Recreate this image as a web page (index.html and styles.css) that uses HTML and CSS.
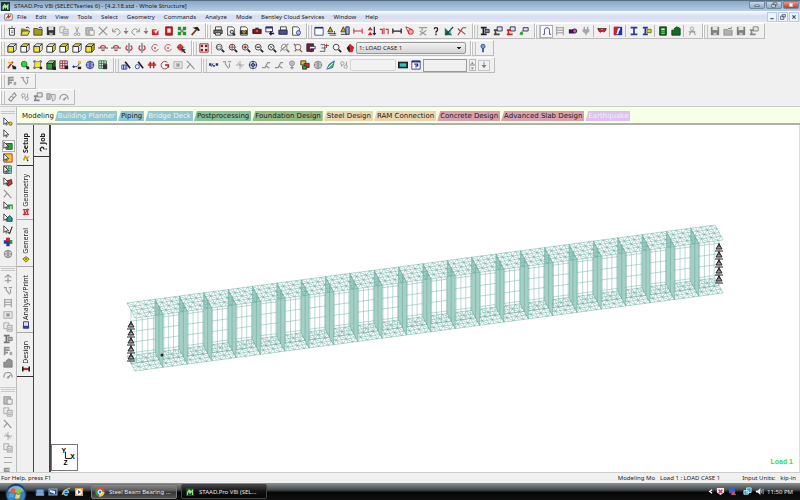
FILE: index.html
```html
<!DOCTYPE html>
<html lang="en">
<head>
    <meta charset="UTF-8">
    <meta name="viewport" content="width=device-width, initial-scale=1.0">
    <title>STAAD.Pro V8i</title>
    <link rel="stylesheet" href="styles.css">
</head>
<body>
    <header class="titlebar">
        <svg class="app-icon" viewBox="0 0 12 12"><rect width="12" height="12" fill="#123c2c"/><path d="M2 10V6l3-4 2 3 3-3v8H8V7L6 9 4 7v3z" fill="#bfe3b0"/></svg>
        <h1>STAAD.Pro V8i (SELECTseries 6) - [4.2.18.std - Whole Structure]</h1>
        <div class="window-buttons">
            <button aria-label="Minimize"><svg viewBox="0 0 12 8"><path d="M3 4h6v2H3z" fill="#fff" stroke="#456"/></svg></button>
            <button aria-label="Restore"><svg viewBox="0 0 12 8"><path d="M5 1h5v3H5zM3 3h5v4H3z" fill="#eee" stroke="#456"/></svg></button>
            <button class="close" aria-label="Close"><svg viewBox="0 0 12 8"><path d="M4 2l4 4M8 2L4 6" stroke="#fff" stroke-width="2"/></svg></button>
        </div>
    </header>

    <nav class="menubar">
        <svg class="doc-icon" viewBox="0 0 12 10"><rect x="1" y="1" width="10" height="8" rx="1" fill="#fff" stroke="#555"/><path d="M3 7l3-4v3l3-3" fill="none" stroke="#c22" stroke-width="1.5"/></svg>
        <a href="#">File</a>
        <a href="#">Edit</a>
        <a href="#">View</a>
        <a href="#">Tools</a>
        <a href="#">Select</a>
        <a href="#">Geometry</a>
        <a href="#">Commands</a>
        <a href="#">Analyze</a>
        <a href="#">Mode</a>
        <a href="#">Bentley Cloud Services</a>
        <a href="#">Window</a>
        <a href="#">Help</a>
        <div class="child-buttons">
            <button aria-label="Minimize document"><svg viewBox="0 0 10 10"><path d="M3 7h4" stroke="#456" stroke-width="1.5"/></svg></button>
            <button aria-label="Restore document"><svg viewBox="0 0 10 10"><path d="M4 2h4v3H4zM2 4h4v4H2z" fill="#eef" stroke="#456"/></svg></button>
            <button aria-label="Close document"><svg viewBox="0 0 10 10"><path d="M3 3l4 4M7 3L3 7" stroke="#456" stroke-width="1.5"/></svg></button>
        </div>
    </nav>

    <!-- a leading "-" means disabled, "|" is a separator, "*" is pressed -->
    <div class="toolbars">
        <div class="toolbar-row">
            <div class="toolbar" data-tools="new open folder save -copy -cut -paste -delete -undo -arrow -redo -arrow redpen book tiles hammer"></div>
            <div class="toolbar" data-tools="print preview camera record export printall page"></div>
            <div class="toolbar" data-tools="window cone conepage dimred loadred framered dim redtag -greytag help greenpen redbeam"></div>
            <div class="toolbar" data-tools="section sheet redsheet greensheet"></div>
            <div class="toolbar" data-tools="*arch -rack moment -plug | bend | flag | ibeam tbeam | calc building | -person"></div>
            <div class="toolbar" data-tools="-save -openview -save -sheet"></div>
        </div>
        <div class="toolbar-row">
            <div class="toolbar" data-tools="cubefront cubeback cubefront cubeside cubetop cubeback cubefull rotx rotx roty roty spin spin redarrow"></div>
            <div class="toolbar" data-tools="frame | zoomwin zoomgrid zoomin zoomout zoomall -pan lens note grab zoom hand">
                <select class="load-case" aria-label="Load case"><option>1: LOAD CASE 1</option></select>
            </div>
            <div class="toolbar" data-tools="key"></div>
        </div>
        <div class="toolbar-row">
            <div class="toolbar" data-tools="beampen greenball yellowbox greencube redgrid node globe greengrid"></div>
            <div class="toolbar" data-tools="wand wand2 stretch circle -plate -axis"></div>
            <div class="toolbar" data-tools="dots -nodes -star wheel -branch -branch -bulb colours -globe leaf -chain">
                <select class="group-list" aria-label="Group" disabled><option></option></select>
                <button class="tool" data-icon="screen"></button>
                <button class="tool" data-icon="helpbox"></button>
                <input class="value-box" type="text" aria-label="Value">
                <span class="spinner"><button aria-label="Up" disabled>▴</button><button aria-label="Down" disabled>▾</button></span>
                <button class="tool framed" data-icon="arrow" disabled></button>
            </div>
        </div>
        <div class="toolbar-row">
            <div class="toolbar" data-tools="-list -nodes"></div>
        </div>
        <div class="toolbar-row">
            <div class="toolbar" data-tools="-link -chain -sheet -book2 -gauge"></div>
        </div>
    </div>

    <main class="workspace">
        <aside class="side-tools">
            <div class="side-group" data-tools="cursorball cursor *cursorgreen cursoryellow cursorgrid cursorred -axis cursortext cursorcube cursorpen cross -globe"></div>
            <div class="side-group" data-tools="-move -nodes -rack -plate -copy -section -list -building -gauge"></div>
            <div class="side-group" data-tools="-paste -copy -axis -star -copy -beam -list"></div>
        </aside>

        <div class="mode">
            <nav class="mode-tabs">
                <a href="#" class="current">Modeling</a>
                <a href="#" class="blue pale">Building Planner</a>
                <a href="#" class="blue">Piping</a>
                <a href="#" class="blue pale">Bridge Deck</a>
                <a href="#" class="green">Postprocessing</a>
                <a href="#" class="olive">Foundation Design</a>
                <a href="#" class="sand">Steel Design</a>
                <a href="#" class="sand">RAM Connection</a>
                <a href="#" class="rose">Concrete Design</a>
                <a href="#" class="rose">Advanced Slab Design</a>
                <a href="#" class="lilac pale">Earthquake</a>
            </nav>
            <div class="mode-body">
                <nav class="page-tabs">
                    <a href="#" class="current"><span>Setup</span><svg viewBox="0 0 10 10"><path d="M2 8l2-5 2 3 2-3" fill="none" stroke="#c5a800" stroke-width="2"/><circle cx="7" cy="8" r="1" fill="#222"/></svg></a>
                    <a href="#"><span>Geometry</span><svg viewBox="0 0 10 10"><path d="M1 2h8M1 8h8M3 2v6l4-6v6" fill="none" stroke="#c33a48" stroke-width="1.5"/></svg></a>
                    <a href="#"><span>General</span><svg viewBox="0 0 10 10"><path d="M1 5l4-3 4 3-4 4z" fill="#e2d51a" stroke="#685f10"/><circle cx="5" cy="5" r="1" fill="#333"/></svg></a>
                    <a href="#"><span>Analysis/Print</span><svg viewBox="0 0 10 10"><rect x="2" y="1" width="6" height="8" fill="#dde" stroke="#226"/><path d="M1 6h8v3H1z" fill="#33418f"/></svg></a>
                    <a href="#"><span>Design</span><svg viewBox="0 0 10 10"><path d="M1 2v6M9 2v6M1 5h8" stroke="#222" stroke-width="2"/><path d="M3 5h3" stroke="#d22" stroke-width="3"/></svg></a>
                </nav>
                <nav class="page-tabs sub">
                    <a href="#" class="current"><span>Job</span><svg viewBox="0 0 10 10"><path d="M3 8Q0 5 3 3q3-1 3 2h1M8 5h2" fill="none" stroke="#222" stroke-width="1.5"/></svg></a>
                </nav>
                <section class="view">
                    <svg class="model" viewBox="51 125 748 347" preserveAspectRatio="xMinYMin"></svg>
                    <svg class="axes" viewBox="0 0 26 26" aria-label="Axes">
                        <path d="M14 7v7h6" fill="none" stroke="#111"/>
                        <text x="10" y="8">Y</text>
                        <text x="19" y="15">X</text>
                        <text x="12" y="21">Z</text>
                    </svg>
                    <p class="load-label">Load 1</p>
                </section>
            </div>
        </div>
    </main>

    <footer class="statusbar">
        <span class="hint">For Help, press F1</span>
        <span>Modeling Mo</span>
        <span class="load">Load 1 : LOAD CASE 1</span>
        <span class="units">Input Units:</span>
        <span>kip-in</span>
    </footer>

    <div class="taskbar">
        <button class="start" aria-label="Start">
            <svg viewBox="0 0 22 22">
                <circle cx="11" cy="11" r="10.5" fill="#1d4a74"/>
                <circle cx="11" cy="12" r="9" fill="#3c82b4"/>
                <path d="M3 8a9 9 0 0 1 16 0q-8 3-16 0z" fill="#a7c8dd" opacity=".7"/>
                <path d="M6 6q2-1.500 4.500 0l-.5 4q-2.500-1.500-5 0z" fill="#ef5a2b"/>
                <path d="M11.500 6q2.500 1.500 5 0l-1 4q-2.500 1.500-4.500 0z" fill="#8cc63f"/>
                <path d="M4.500 11q2.500-1.500 5 0l-1 4q-2-1.500-4.500 0z" fill="#3fa9f5"/>
                <path d="M11 11q2 1.500 4.500 0l-1 4q-2.500 1.500-4.500 0z" fill="#ffd23c"/>
            </svg>
        </button>
        <div class="quick">
            <button aria-label="Show desktop"><svg viewBox="0 0 10 10"><rect x="1" y="2" width="8" height="6" fill="#6fa3dc" stroke="#2d4f80"/><path d="M1 8h8" stroke="#ccd"/></svg></button>
            <button aria-label="Switch windows"><svg viewBox="0 0 10 10"><rect x="1" y="2" width="8" height="6" fill="#234c86" stroke="#8fb0d4"/><path d="M2 3l5 1v3l-5-2z" fill="#dbe8f7"/></svg></button>
            <button aria-label="Internet Explorer"><svg viewBox="0 0 10 10"><path d="M2.500 5.500h5a2.500 2.500 0 1 0-.8 2" fill="none" stroke="#67bdf2" stroke-width="1.600"/><path d="M1 8Q2 3 9 1" fill="none" stroke="#f2c84b"/></svg></button>
            <button aria-label="Media Player"><svg viewBox="0 0 10 10"><rect x="1" y="1" width="8" height="8" fill="#f29a2e"/><circle cx="5" cy="5" r="3" fill="#fff"/><path d="M4 3l3 2-3 2z" fill="#2a66b8"/></svg></button>
        </div>
        <button class="task">
            <svg viewBox="0 0 10 10"><circle cx="5" cy="5" r="4.500" fill="#dd4b39"/><path d="M5 5L1 3a4.500 4.500 0 0 0 3 6.500z" fill="#2e9e4d"/><path d="M5 5h4.500A4.500 4.500 0 0 1 4 9.500z" fill="#f8cc3a"/><circle cx="5" cy="5" r="2" fill="#3f84e5" stroke="#fff"/></svg>
            <span>Steel Beam Bearing ...</span>
        </button>
        <button class="task active">
            <svg viewBox="0 0 10 10"><rect x="1" y="1" width="8" height="8" fill="#1d4a30"/><path d="M2 8V5l2-3 2 2 2-2v6H7V5L5 7 3 5v3z" fill="#9ede7e"/></svg>
            <span>STAAD.Pro V8i (SEL...</span>
        </button>
        <div class="tray">
            <button aria-label="Show hidden icons"><svg viewBox="0 0 6 10"><path d="M5 3L2 5l3 2" fill="none" stroke="#fff" stroke-width="1.500"/></svg></button>
            <svg viewBox="0 0 10 10"><path d="M1 1h8v5L5 9 1 6z" fill="#eee"/><path d="M3 3l4 4M7 3L3 7" stroke="#d2334a" stroke-width="1.500"/></svg>
            <svg viewBox="0 0 10 10"><rect x="1" y="1" width="7" height="6" fill="#2a62c8"/><path d="M3 9l3-5 3 5z" fill="#e2492d"/></svg>
            <svg class="network" viewBox="0 0 10 10"><path d="M1 4h5v4H1zM4 1h5v5H4z" fill="#2aa6c4" stroke="#bde6f0"/></svg>
            <svg viewBox="0 0 10 10"><path d="M1 4h2l3-3v8L3 6H1z" fill="#eee"/><path d="M7 3v4M9 2v6" stroke="#9fc98a"/></svg>
            <time>11:50 PM</time>
        </div>
    </div>

    <script src="script.js"></script>
</body>
</html>
```
FILE: styles.css
```css
*,
*::before {
    box-sizing: border-box;
}
body {
    margin: 0;
    height: 100vh;
    display: flex;
    flex-direction: column;
    overflow: hidden;
    background-color: #f0f0f0;
    color: #222;
    font: 6px/10px "Noto Sans", "Open Sans", sans-serif;
}
button {
    padding: 0;
    border: 0;
    background: none;
    font: inherit;
    color: inherit;
}
a {
    color: inherit;
    text-decoration: none;
}
svg {
    display: block;
}

/* title and menu */
.titlebar {
    height: 11px;
    flex: none;
    display: flex;
    align-items: center;
    border-top: 1px solid #586d82;
    background: linear-gradient(#87a8c9, #b6cde4);
}
.app-icon {
    width: 9px;
    height: 9px;
    margin: 0 4px 0 1px;
}
.titlebar h1 {
    margin: 0;
    font-size: 6px;
    font-weight: 400;
}
.window-buttons {
    display: flex;
    gap: 1px;
    margin: 0 1px 2px auto;
}
.window-buttons button {
    width: 16px;
    height: 8px;
    border: 1px solid #7189a3;
    border-radius: 0 0 2px 2px;
    background: linear-gradient(#c9d9e9, #91abc6);
}
.window-buttons .close {
    background: linear-gradient(#dc9a8e, #bd3c25);
}
.window-buttons svg {
    width: 100%;
    height: 100%;
}
.menubar {
    height: 12px;
    flex: none;
    display: flex;
    align-items: center;
    gap: 9px;
    background: linear-gradient(#fff, #d7def1 45%, #dfe4f5);
    border-bottom: 1px solid #fafafa;
}
.doc-icon {
    width: 9px;
    height: 8px;
    margin: 0 -5px 0 4px;
}
.child-buttons {
    display: flex;
    gap: 1px;
    margin: 0 1px 0 auto;
}
.child-buttons button {
    width: 10px;
    height: 10px;
    border: 1px solid #b9cbe0;
    background-color: #edf3fb;
}

/* toolbars */
.toolbars {
    flex: none;
    padding-bottom: 1px;
    border-bottom: 1px solid #ccc;
}
.toolbar-row {
    display: flex;
    height: 16px;
    margin-bottom: 1px;
}
.toolbar-row:nth-child(n+3) {
    margin-bottom: 0;
}
.toolbar {
    display: flex;
    align-items: center;
    padding-right: 4px;
    border: 1px solid;
    border-color: #fff #bcbcbc #bcbcbc #fff;
}
.toolbar::before {
    content: "";
    width: 4px;
    height: 13px;
    border: 1px solid #c2c2c2;
    border-width: 0 1px;
    flex: none;
}
.tool {
    width: 13px;
    height: 13px;
    flex: none;
    display: flex;
    align-items: center;
    justify-content: center;
}
.tool svg {
    width: 10px;
    height: 10px;
    flex: none;
}
.tool[data-icon="arrow"] {
    width: 7px;
}
.tool:disabled {
    color: #999;
    filter: grayscale(1);
    opacity: .6;
}
.tool.pressed {
    border: 1px solid #b0b0b0;
    background-color: #fafafa;
}
.tool.framed {
    width: 12px;
    height: 11px;
    margin-left: 2px;
    border: 1px solid #aaa;
}
.tool-sep {
    width: 1px;
    height: 12px;
    margin: 0 1px;
    background-color: #bbb;
}
select {
    height: 12px;
    padding: 0 4px;
    border: 1px solid #999;
    border-radius: 2px;
    appearance: none;
    font: inherit;
    color: #222;
    background: linear-gradient(45deg, transparent 50%, #222 50%) no-repeat right 6px center / 2px 2px,
        linear-gradient(-45deg, transparent 50%, #222 50%) no-repeat right 4px center / 2px 2px,
        linear-gradient(#f1f1f1, #d4d4d4);
}
.load-case {
    width: 110px;
    padding: 0 2px;
}
.group-list {
    width: 46px;
    border-color: #ccc;
    background: #f4f4f4;
}
.value-box {
    width: 44px;
    height: 13px;
    margin-left: 1px;
    padding: 0 2px;
    border: 1px solid #999;
    background-color: #f0f0f0;
    font: inherit;
}
.spinner {
    display: flex;
    flex-direction: column;
    margin-left: 2px;
}
.spinner button {
    width: 7px;
    height: 6px;
    border: 1px solid #bbb;
    font-size: 5px;
    line-height: 4px;
    color: #888;
}

/* work area */
.workspace {
    flex: 1;
    min-height: 0;
    display: flex;
}
.side-tools {
    width: 17px;
    flex: none;
    padding-top: 3px;
    overflow: hidden;
    border-right: 1px solid #bbb;
}
.side-group {
    display: flex;
    flex-direction: column;
    align-items: center;
    padding-bottom: 6px;
    border-bottom: 1px solid #ccc;
}
.side-group::before {
    content: "";
    width: 14px;
    height: 3px;
    margin: 1px 0 2px;
    border: 1px solid #c8c8c8;
    border-width: 1px 0;
}
.side-group .tool {
    height: 12px;
}
.mode {
    flex: 1;
    min-width: 0;
    display: flex;
    flex-direction: column;
}
.mode-tabs {
    display: flex;
    flex: none;
    gap: 1px;
    padding: 4px 0 2px 2px;
    background-color: #f7ffe6;
    border-bottom: 2px solid #aeb0ae;
    font: 7px/10px "DejaVu Sans", sans-serif;
}
.mode-tabs a {
    padding: 0 2px 0 3px;
    clip-path: polygon(3px 0, 100% 0, 100% 100%, 0 100%);
}
.mode-tabs .current {
    padding-right: 0;
}
.mode-tabs .blue {
    background-color: #92c5cf;
}
.mode-tabs .green {
    background-color: #86c096;
}
.mode-tabs .olive {
    background-color: #94ba83;
}
.mode-tabs .sand {
    background-color: #e8d5ad;
}
.mode-tabs .rose {
    background-color: #d9a0ac;
}
.mode-tabs .lilac {
    background-color: #dfc0f0;
}
.mode-tabs .pale {
    color: #e2f6fa;
}
.mode-body {
    flex: 1;
    min-height: 0;
    display: flex;
}
.page-tabs {
    width: 17px;
    flex: none;
    border-right: 1px solid #444;
    font-size: 7px;
}
.page-tabs.sub {
    border-right-width: 2px;
}
.page-tabs a {
    display: flex;
    flex-direction: column;
    align-items: center;
    gap: 1px;
    padding: 8px 0 3px 2px;
    border-bottom: 1px solid #aaa;
}
.page-tabs .current,
.page-tabs a:last-child {
    border-color: #333;
}
.page-tabs .current {
    font-weight: 700;
}
.page-tabs span {
    writing-mode: vertical-rl;
    transform: rotate(180deg);
}
.page-tabs svg {
    width: 8px;
    height: 8px;
}
.view {
    position: relative;
    flex: 1;
    min-width: 0;
    background-color: #fff;
    border-right: 1px solid #ddd;
}
.model {
    width: 100%;
    height: 100%;
}
.mesh {
    fill: none;
    stroke: #68aca0;
    stroke-width: .5;
}
.mesh-web {
    stroke: #78b2a6;
}
.stiffener {
    fill: #a5d0c6;
    stroke: #5ea597;
    stroke-width: .5;
}
.support {
    fill: #999;
    stroke: #222;
    stroke-width: 1;
}
.axes {
    position: absolute;
    left: 0;
    bottom: 1px;
    width: 27px;
    height: 27px;
    border: 1px solid #777;
}
.axes text {
    font: 700 7px "Liberation Sans", sans-serif;
}
.load-label {
    position: absolute;
    right: 6px;
    bottom: 5px;
    margin: 0;
    color: #2be82b;
    font: 700 7px/10px "Liberation Sans", sans-serif;
}

/* status bar and taskbar */
.statusbar {
    height: 11px;
    flex: none;
    display: flex;
    align-items: center;
    gap: 5px;
    padding: 0 4px 0 1px;
    border-top: 1px solid #ccc;
}
.hint {
    margin-right: auto;
}
.units {
    margin-left: 17px;
}
.taskbar {
    height: 17px;
    flex: none;
    display: flex;
    align-items: center;
    gap: 4px;
    padding: 0 7px 0 5px;
    background: linear-gradient(#8b9092, #45494b 40%, #050607 55%, #111);
    color: #e8e8e8;
    white-space: nowrap;
}
.start {
    width: 22px;
    height: 18px;
    flex: none;
    overflow: hidden;
}
.start svg {
    width: 22px;
    height: 22px;
}
.quick {
    display: flex;
    gap: 3px;
    margin: 0 3px 0 4px;
}
.quick svg,
.task svg {
    width: 10px;
    height: 10px;
    flex: none;
}
.task {
    width: 86px;
    height: 15px;
    display: flex;
    align-items: center;
    gap: 4px;
    padding: 0 2px 0 3px;
    border: 1px solid #777;
    border-radius: 2px;
    background: linear-gradient(#888, #555 48%, #333 52%, #555);
}
.task.active {
    border-color: #444;
    background: linear-gradient(#444, #111 50%, #050505);
}
.tray {
    display: flex;
    align-items: center;
    gap: 3px;
    margin-left: auto;
}
.tray svg {
    width: 9px;
    height: 9px;
}
.tray button svg {
    width: 5px;
}
.network {
    margin-left: 3px;
}
```
FILE: script.js
```js
// small drawing helpers, every icon lives on a 12x12 grid
const line = (d, color = '#222', w = 1) => `<path d="${d}" fill="none" stroke="${color}" stroke-width="${w}"/>`;
const fill = (d, color, edge = 'none') => `<path d="${d}" fill="${color}" stroke="${edge}"/>`;
const ring = (x, y, r, color = '#222', inner = 'none') => `<circle cx="${x}" cy="${y}" r="${r}" fill="${inner}" stroke="${color}"/>`;

const sheet = fill('M2 1h6l2 2v8H2z', '#fff', '#333');
const lens = ring(5, 5, 3.5, '#333', '#f6f6f6') + line('M8 8l3 3', '#222', 2);
const pointer = fill('M1 1v8l2-2 1 3 1-1-1-2h3z', '#fff', '#333');
const disk = fill('M1 1h10v10H1z', '#333') + fill('M3 1h6v4H3z', '#ddd') + fill('M4 8h4v3H4z', '#aaa');
const box = (front, top, side) =>
    fill('M1 4h7v7H1z', front, '#222') + fill('M1 4l3-3h7L8 4z', top, '#222') + fill('M8 4l3-3v7l-3 3z', side, '#222');
const beamSheet = (color) => fill('M5 1h6v5H5z', '#dde', '#224') + line('M1 5h5M1 10h7M3 5v5', color, 2);
const grid = (color) => fill('M1 1h9v9H1z', '#eee', color) + line('M4 1v9M7 1v9M1 4h9M1 7h9', color);

const icons = {
    new: fill('M3 3h6v8H3z', '#fff', '#333') + line('M1 4l2-2M6 0v3M10 2L8 4M5 6h3M5 8h3', '#555'),
    open: fill('M1 3h4l1 1h4v7H1z', '#8b8420') + fill('M3 6h9l-3 5H1z', '#e2da54', '#4d4810') + line('M7 2q3-2 4 1'),
    folder: fill('M1 3h4l1 1h5v7H1z', '#a39a25', '#49440c') + line('M7 2q3-2 4 1'),
    save: disk,
    copy: fill('M1 1h6v7H1z', '#eee', '#666') + fill('M5 4h6v7H5z', '#ddd', '#666') + line('M6 7h4M6 9h4', '#777'),
    cut: line('M4 1l3 7M8 1L5 8', '#555') + ring(4, 10, 1.5, '#555') + ring(8, 10, 1.5, '#555'),
    paste: fill('M1 2h8v9H1z', '#999', '#555') + fill('M5 5h6v6H5z', '#eee', '#555'),
    delete: line('M1 1l10 10M11 1L1 11', '#555', 1.5),
    undo: line('M2 3v4h4M2 7q5-6 8-2t-3 6', '#555', 1.2),
    redo: line('M10 3v4H6M10 7Q5 1 2 5t3 6', '#555', 1.2),
    arrow: line('M6 2v5', '#333') + fill('M3 6h6l-3 4z', '#333'),
    redpen: fill('M1 4h8v7H1z', '#c9232c') + line('M5 8l6-7', '#eee', 2) + line('M3 6h3v3', '#fff'),
    book: fill('M2 1h8v10H2z', '#c22', '#711') + fill('M4 3h4v5H4z', '#eee'),
    tiles: fill('M1 1h4v4H1zM7 1h4v4H7zM1 7h4v4H1zM7 7h4v4H7z', '#26922f') + line('M4 6h4M6 4v4', '#555'),
    hammer: line('M2 11l6-7', '#6b4a16', 2) + fill('M3 2l6-1 3 4-2 1-3-2z', '#222'),
    print: fill('M3 1h7v4H3z', '#fff', '#333') + fill('M1 5h10v4H1z', '#777', '#222') + fill('M3 8h6v3H3z', '#ddd', '#333'),
    preview: sheet + ring(7, 7, 2, '#222', '#cde') + line('M8 9l3 2', '#222', 2),
    camera: sheet + fill('M1 5h9v5H1z', '#333') + ring(6, 7, 1.5, '#ddc820'),
    record: fill('M1 4h10v5H1z', '#7a1620', '#311') + fill('M4 2h4v2H4z', '#333') + ring(6, 6, 1, '#e77'),
    export: fill('M1 1h8v6H1z', '#fff', '#225') + fill('M1 1h8v2H1z', '#24317c') + line('M5 9h6M7 6v5', '#222', 2),
    printall: fill('M3 1h7v4H3z', '#fff', '#333') + fill('M1 5h10v5H1z', '#4c4c9a', '#223'),
    page: sheet + ring(9, 8, 2.5, '#2540a0', '#b8c4ef'),
    window: fill('M1 2h10v9H1z', '#fff', '#35417e') + fill('M1 1h10v2H1z', '#24317c'),
    cone: fill('M4 1l3 6H1z', '#b8ad26', '#333') + line('M1 9h10M3 11h8M9 6v4', '#444'),
    conepage: fill('M4 1l3 6H1z', '#b8ad26', '#333') + fill('M7 1h4v9H7z', '#9cb0dd', '#223') + line('M1 10h7'),
    dimred: line('M1 3v6M11 3v6M1 6h10', '#c3303a', 1.3),
    loadred: fill('M5 1l3 4H2zM5 7l3 4H2z', '#d3202c') + line('M10 1v10M8 9h4', '#224', 1.5),
    framered: line('M1 4h3v6M6 2v8M8 4h3v6', '#c3303a', 1.3),
    dim: line('M1 3v6M11 3v6M1 6h10', '#222', 1.5),
    redtag: ring(7, 7, 3, '#b22', '#eaa') + line('M1 1l4 9M1 1l7 3', '#b22'),
    greytag: line('M1 2h4v4M6 2h5M2 6l8 5M10 5l-8 6', '#666', 1.5),
    help: line('M4 4q0-2 2-2t2 2-2 3v1M6 9v2', '#222', 1.6),
    greenpen: fill('M1 2l9 9H1z', '#1c7050') + line('M2 11L11 1', '#235', 1.5) + line('M8 3v7', '#2a8'),
    redbeam: line('M1 11l6-9h4M4 5l6 5M1 3l3 3', '#a5424a', 1.3),
    section: line('M1 2h7M1 10h7M4 2v8', '#222', 2) + fill('M6 4h5v4H6z', '#88a', '#222'),
    sheet: beamSheet('#444'),
    redsheet: beamSheet('#c22'),
    greensheet: fill('M5 2h6v4H5z', '#dde', '#224') + line('M1 10l4-5', '#484') + ring(3, 9, 1.5, '#181', '#3b3'),
    arch: line('M1 10h2V5q0-3 3-3t3 3v5h2', '#35417e'),
    rack: line('M2 1v10M10 1v10M2 2h8M2 5h8M2 8h8', '#666', 1.3),
    moment: fill('M1 4h6v5H1z', '#302050') + ring(8, 6, 2.5, '#303', '#d44bc2'),
    plug: fill('M2 4h8v3L7 9H5L2 7z', '#777') + line('M4 1v4M8 1v4M6 8v3', '#666', 1.5),
    bend: line('M1 3h10', '#333') + fill('M1 3q2 7 5 3 4 3 5-3l-5 2z', '#d2222b', '#811'),
    flag: fill('M1 1h10v10H1z', '#2030a8') + fill('M1 1h6L3 11H1z', '#d11f2a') + fill('M6 3l3-1-3 8H4z', '#fff'),
    ibeam: line('M2 2h8M2 10h8M6 2v8', '#283a8e', 2),
    tbeam: line('M1 2h6M1 10h6M4 2v8', '#283a8e', 2) + fill('M6 4h5v4H6z', '#d8d43b', '#662'),
    calc: fill('M2 1h8v10H2z', '#147020', '#062e0c') + fill('M4 3h4v2H4z', '#dfd') + line('M4 7h4M4 9h4', '#9d9'),
    building: fill('M1 5h3V3l3-2 4 2v8H1z', '#146c24', '#0a3a13'),
    person: ring(6, 3, 2, '#666') + line('M3 11l2-5h3l2 5M2 7h8', '#666', 1.3),
    openview: fill('M1 4h4l1 1h5v6H1z', '#888', '#555') + line('M6 3h4V1'),
    cubefront: box('#f2e834', '#fff', '#fff'),
    cubeback: box('#fff', '#f2e834', '#fff'),
    cubeside: box('#fff', '#fff', '#f2e834'),
    cubetop: box('#fff', '#f2e834', '#f2e834'),
    cubefull: box('#f2e834', '#f8f070', '#c9bf19'),
    rotx: line('M0 6h12', '#333') + line('M3 6a3 3 0 0 1 6 0M4 8l2 1 2-1', '#c3303a', 1.4),
    roty: line('M6 0v12', '#333') + line('M4 3q-4 4 1 6M8 3q4 4-1 6', '#c3303a', 1.4),
    spin: line('M9 3a4 4 0 1 0 1 4', '#b3404a') + ring(6, 6, .5, '#222'),
    redarrow: ring(5, 5, 3, '#a22', '#e66') + line('M1 5h9M5 1v9', '#a22') + fill('M6 6l6 2-2 1 2 3-2 0-2-2-1 2z', '#333'),
    frame: fill('M1 1h10v10H1z', '#fff', '#8c2020') + fill('M2 2h3v3H2zM7 2h3v3H7zM2 7h3v3H2zM7 7h3v3H7z', '#8c2020'),
    zoomwin: lens + line('M3 4h4v3H3z', '#888'),
    zoomgrid: lens + line('M5 1v8M1 5h8', '#833'),
    zoomin: lens + line('M5 3v4M3 5h4', '#b22', 1.5),
    zoomout: lens + line('M3 5h4', '#333', 1.5),
    zoomall: lens + line('M3 3l4 4M7 3L3 7', '#666'),
    pan: lens + line('M0 10L10 1', '#555', 1.5),
    lens: ring(6, 5, 3.5, '#754') + line('M2 10l2-2M8 8l3 3M1 1l2 2', '#754', 1.5),
    note: fill('M1 1h8v9H1z', '#7c2034', '#224') + fill('M4 4h7v3H6v4z', '#fff', '#224'),
    grab: line('M2 2h5v8H1M3 6h5', '#444') + line('M9 1v5M7 3h5', '#c22'),
    zoom: lens,
    hand: fill('M2 6l4-5 5 4-2 6H5z', '#cf2630') + fill('M2 6l3-3 1 5-1 3z', '#222'),
    key: ring(6, 4, 2.5, '#2b4c94', '#7ba0dc') + line('M6 6v5', '#2b4c94', 2),
    beampen: line('M1 10L7 2', '#b22', 2) + line('M1 3l5 1', '#db2', 2) + fill('M6 6l5 2v3H7z', '#222'),
    greenball: ring(5, 5, 3.500, '#1a8a22', '#36ce3e') + fill('M7 7l4 1v3H8z', '#222'),
    yellowbox: fill('M2 2h7v7H2z', '#f2e834', '#776') + line('M1 3V1h2M8 1h2v2M1 8v2h2', '#333') + fill('M8 8h3v3H8z', '#222'),
    greencube: box('#33a33c', '#a3e3a3', '#12701c') + fill('M8 8h4v4H8z', '#222'),
    redgrid: grid('#8c2835') + fill('M7 7h4v4H7z', '#222'),
    node: line('M1 8h5l4-5', '#333') + ring(9, 3, 1.500, '#b8a010', '#ee3') + ring(2, 8, 1, '#22a', '#44d') + fill('M7 8h4v3H7z', '#222'),
    globe: ring(6, 6, 4.500, '#263488', '#cdd6f8') + line('M1 6h10M6 1v10M3 3q3 2 6 0M3 9q3-2 6 0', '#263488'),
    greengrid: grid('#1c6b2b') + fill('M6 5h5v6H6z', '#333'),
    wand: fill('M1 6h6v5H1z', '#eef', '#2535a0') + line('M3 6v5M5 6v5', '#2535a0') + line('M5 2l6 8', '#222', 2),
    wand2: ring(4, 8, 2.500, '#2535a0') + line('M5 2l6 8', '#222', 2),
    stretch: line('M1 6h10M4 2v8M8 2v8', '#b22', 1.600) + line('M2 4h8', '#b22'),
    circle: line('M9 3a4.500 4.500 0 1 0 1 5', '#a02834') + line('M6 6h4v3', '#a02834', 2),
    plate: fill('M1 2h10v8H1z', '#ddd', '#777') + fill('M4 4h4v4H4z', '#666'),
    axis: line('M1 1l4 4 5 6M5 5L1 10', '#555', 1.300),
    dots: fill('M0 4h3v3H0zM5 6h2v2H5zM8 4h3v3H8z', '#263488') + line('M3 8l2-4'),
    nodes: line('M1 2h3v3M7 2h4M4 5l4 5M9 4v5', '#666', 1.400),
    star: line('M6 1v10M1 6h10M3 3l6 6', '#666'),
    wheel: ring(6, 6, 4.500, '#263468') + ring(6, 6, 2, '#263468') + line('M6 1v10M1 6h10', '#263468'),
    branch: line('M1 9h4l3-6h3M6 7l4 3', '#555', 1.500),
    bulb: ring(6, 4, 3, '#555', '#999') + line('M6 7v4M4 9h4', '#555', 1.500),
    colours: fill('M1 1h6v5H1z', '#e0bf22', '#333') + fill('M5 4h6v5H5z', '#cf2c2c', '#333') + fill('M3 7h5v4H3z', '#2c9c38', '#333'),
    leaf: fill('M10 1L8 9 1 11l3-6z', '#5cb87c', '#2b54a0') + line('M2 10l6-6', '#fff'),
    chain: ring(4, 4, 2, '#555') + ring(8, 8, 2, '#555') + line('M3 8v-2M9 6V2', '#555'),
    screen: fill('M0 2h12v8H0z', '#222') + fill('M2 4h8v4H2z', '#2cc7c7'),
    helpbox: fill('M1 1h10v10H1z', '#fff', '#24317c') + fill('M1 1h10v2H1z', '#24317c') + line('M4 5h4v2H6v1M6 9v1', '#24317c', 1.5),
    list: line('M2 1v10M2 2h6M2 5h6M2 8h4', '#555', 2) + fill('M8 7h3v4H8z', '#777'),
    link: line('M2 9l3-4 3 2-3 4zM6 4l3-3 2 3-3 3', '#555', 1.300),
    book2: fill('M1 2h4v7H1z', '#999', '#555') + fill('M6 3h5v6l-3 2z', '#ddd', '#555'),
    gauge: line('M1 9q0-6 5-6t5 6M6 9l3-3', '#555', 1.300) + ring(6, 9, 1, '#555'),
    cursorball: pointer + ring(9, 8, 2, '#775f00', '#e9c81b'),
    cursor: pointer,
    cursorgreen: fill('M4 3h7v7H4z', '#2aa339', '#0c5516') + pointer,
    cursoryellow: fill('M1 1h10v10H1z', '#f2c82c', '#a33') + pointer,
    cursorgrid: grid('#13602e') + fill('M4 4h5v5H4z', '#32c4a0') + pointer,
    cursorred: fill('M4 5l6-2 1 5-5 3z', '#c33842', '#611') + pointer,
    cursortext: pointer + line('M6 10V5h5v5M8 5v5', '#278a3a', 1.400),
    cursorcube: pointer + fill('M5 6l3-3 3 3v4H5z', '#2a9696', '#144'),
    cursorpen: pointer + line('M6 9l2 1 3-8', '#333', 1.400),
    cross: fill('M4 1h4v3h3v4H8v3H4V8H1V4h3z', '#273a90') + fill('M4 1h4v4H4z', '#c9262f') + fill('M8 4h3v4H8z', '#2a9c38'),
    move: line('M6 1v10M2 4l4-3 4 3M2 8h8', '#555', 1.300),
    beam: line('M1 3h10M1 9h10', '#666')
};

function setIcon(button, name) {
    button.dataset.icon = name;
    button.setAttribute('aria-label', name);
    button.innerHTML = `<svg viewBox="0 0 12 12">${icons[name]}</svg>`;
}

document.querySelectorAll('.tool').forEach((button) => setIcon(button, button.dataset.icon));

document.querySelectorAll('[data-tools]').forEach((bar) => {
    const items = bar.dataset.tools.split(' ').map((entry) => {
        if (entry === '|') {
            const sep = document.createElement('span');
            sep.className = 'tool-sep';
            return sep;
        }
        const button = document.createElement('button');
        button.className = entry[0] === '*' ? 'tool pressed' : 'tool';
        button.disabled = entry[0] === '-';
        setIcon(button, entry.replace(/^[-*]/, ''));
        return button;
    });
    bar.prepend(...items);
});

// plate girder
const slope = -78 / 588;
const depth = 53;
const bays = 24;
const first = 28;
const step = 24.35;

// u runs along the girder, v from the back edge of a flange (0) to the front (1), h down
const point = (u, v, h) => `${(127 + u + v * 8).toFixed(1)} ${(303 + u * slope + v * 15 + h).toFixed(1)}`;
const seg = (a, b) => `M${point(...a)}L${point(...b)}`;
const stations = [0];
for (let i = 0; i < bays; i++) {
    stations.push(first + i * step);
}
const end = stations[bays];

let web = '';
for (let i = 0; i < bays; i++) {
    const w = (stations[i + 1] - stations[i]) / 5;
    for (let j = 0; j < 5; j++) {
        const u = stations[i] + j * w;
        web += seg([u, .5, 0], [u, .5, depth]);
    }
}
for (let j = 0; j <= 5; j++) {
    web += seg([0, .5, j * depth / 5], [end, .5, j * depth / 5]);
}
web += seg([end, .5, 0], [end, .5, depth]);

function flange(h) {
    let d = '';
    for (let j = 0; j <= 4; j++) {
        d += seg([0, j / 4, h], [end, j / 4, h]);
    }
    for (let i = 0; i < bays; i++) {
        const w = (stations[i + 1] - stations[i]) / 5;
        for (let j = 0; j < 5; j++) {
            const u = stations[i] + j * w;
            d += seg([u, 0, h], [u, 1, h]);
            for (let k = 0; k < 4; k++) {
                const flip = (j + k) % 2;
                d += seg([u + (flip ? w : 0), k / 4, h], [u + (flip ? 0 : w), (k + 1) / 4, h]);
            }
        }
    }
    return d + seg([end, 0, h], [end, 1, h]);
}

let stiffeners = '';
for (const u of stations.slice(1, -1)) {
    stiffeners += `<path class="stiffener" d="M${point(u, 0, 0)}L${point(u, 1, 0)}L${point(u, 1, depth)}L${point(u, 0, depth)}z${seg([u, .5, 0], [u, .5, depth])}"/>`;
}

function supports(x, y) {
    let d = '';
    for (let i = 0; i < 5; i++) {
        const t = y + i * 8;
        d += `M${x} ${t}l-3 5h6zM${x - 4} ${t + 7}h8M${x} ${t - 1}v4`;
    }
    return `<path class="support" d="${d}"/>`;
}

document.querySelector('.model').innerHTML = `
    <path class="mesh mesh-web" d="${web}"/>
    <path fill="#fff" d="M${point(0, 0, 0)}L${point(end, 0, 0)}L${point(end, 1, 0)}L${point(0, 1, 0)}z"/>
    <path class="mesh" d="${flange(depth)}"/>
    ${stiffeners}
    <path class="mesh" d="${flange(0)}"/>
    ${supports(131, 322)}
    ${supports(719, 244)}
    <circle cx="162" cy="355" r="1.5" fill="#222"/>`;
```
